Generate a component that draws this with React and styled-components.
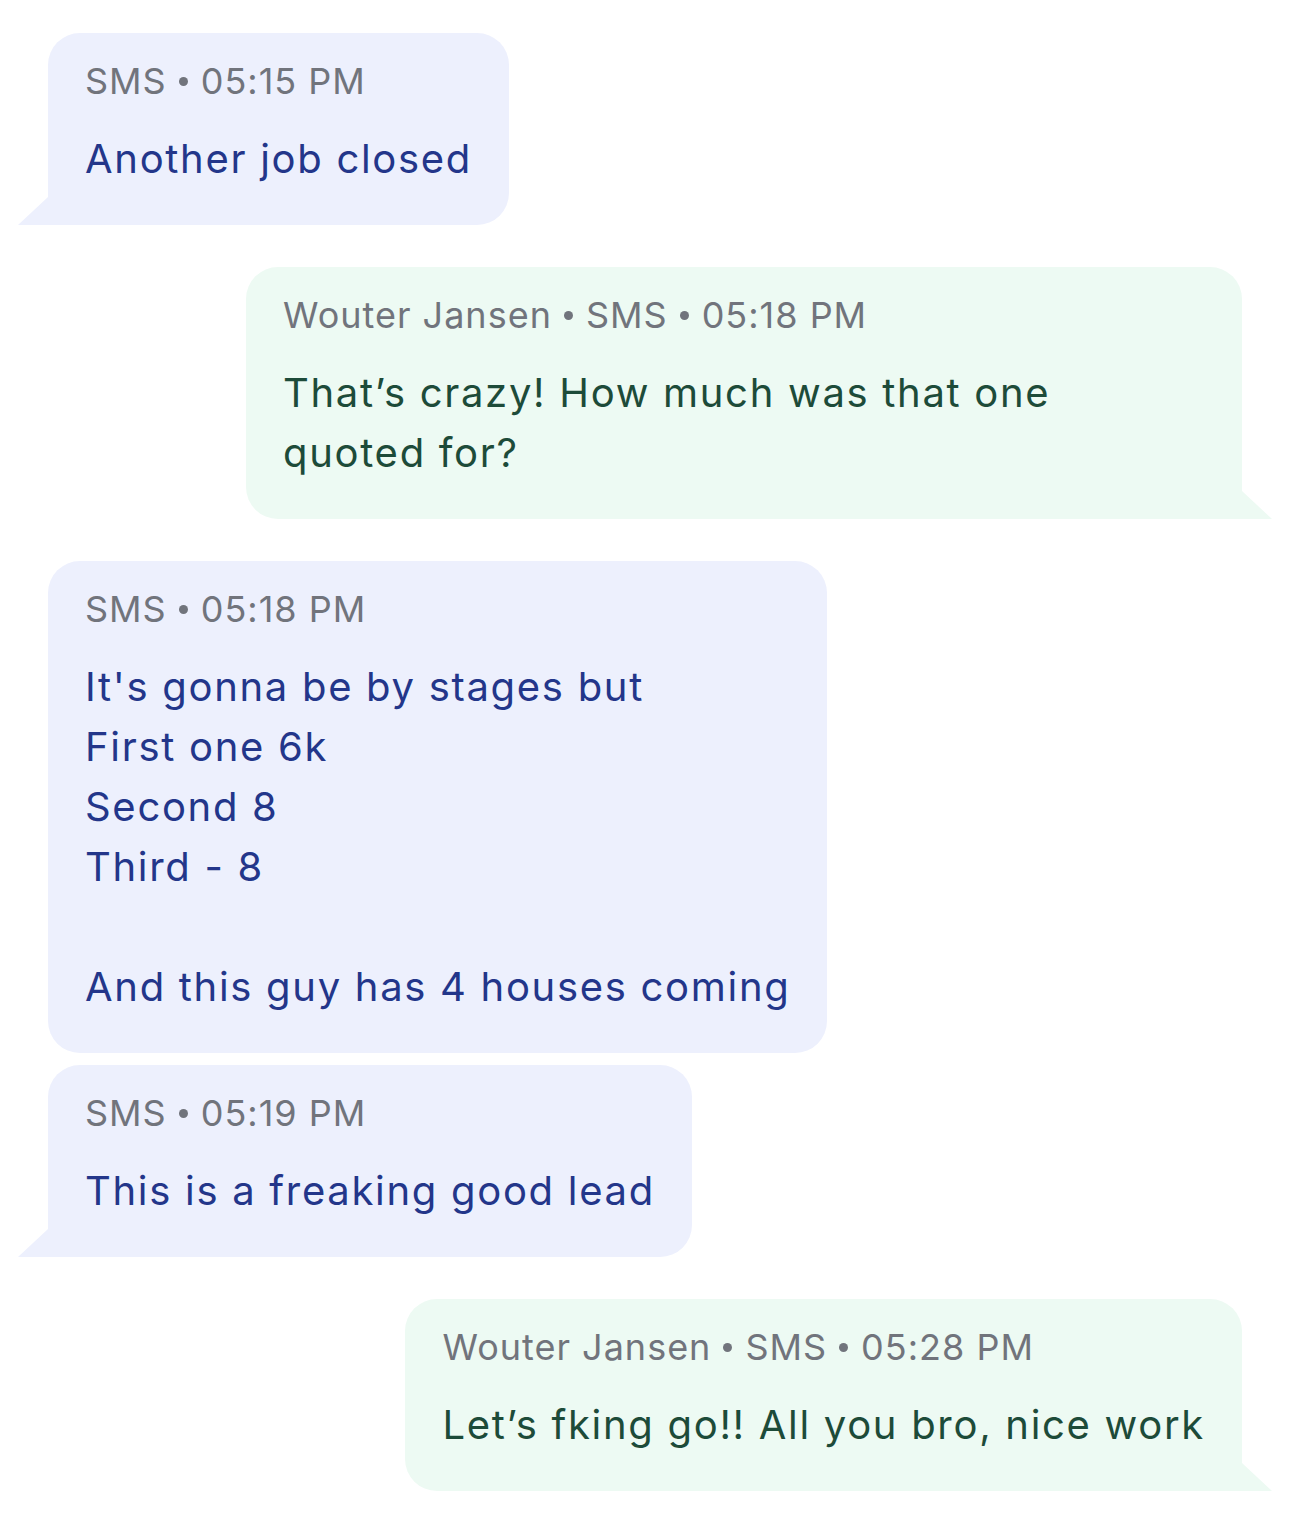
import React from "react";
import styled, { createGlobalStyle, css } from "styled-components";

const Global = createGlobalStyle`
  html, body { margin: 0; padding: 0; background: #ffffff; }
  body { font-family: Inter, "Noto Sans", sans-serif; -webkit-font-smoothing: antialiased; }
`;

const Thread = styled.div`
  display: flex;
  flex-direction: column;
  padding: 33px 48px 26px;
`;

const Row = styled.div`
  display: flex;
  justify-content: ${(p) => (p.$out ? "flex-end" : "flex-start")};
  margin-top: ${(p) => (p.$first ? "0" : p.$grouped ? "12px" : "42px")};
`;

const palette = {
  in: { bg: "#edf0fd", fg: "#23368a" },
  out: { bg: "#edfaf3", fg: "#1d4b39" },
};

const Bubble = styled.div`
  position: relative;
  box-sizing: border-box;
  max-width: 996px;
  padding: 28px 37px 36px;
  border-radius: 32px;
  background: ${(p) => (p.$out ? palette.out.bg : palette.in.bg)};
  ${(p) =>
    p.$tail &&
    (p.$out
      ? css`
          border-bottom-right-radius: 0;
          &::after {
            content: "";
            position: absolute;
            right: -30px;
            bottom: 0;
            width: 30px;
            height: 28px;
            background: ${palette.out.bg};
            clip-path: polygon(0 0, 100% 100%, 0 100%);
          }
        `
      : css`
          border-bottom-left-radius: 0;
          &::after {
            content: "";
            position: absolute;
            left: -30px;
            bottom: 0;
            width: 30px;
            height: 28px;
            background: ${palette.in.bg};
            clip-path: polygon(100% 0, 100% 100%, 0 100%);
          }
        `)}
`;

const Meta = styled.div`
  font-size: 36px;
  line-height: 40px;
  color: #71747c;
  letter-spacing: 1px;
  white-space: nowrap;
`;

const Dot = styled.span`
  display: inline-block;
  width: 9px;
  height: 9px;
  border-radius: 50%;
  background: #71747c;
  margin: 0 13px 0 12px;
  vertical-align: 8px;
`;

const Body = styled.div`
  margin-top: 28px;
  font-size: 40px;
  line-height: 60px;
  letter-spacing: 1.7px;
  color: ${(p) => (p.$out ? palette.out.fg : palette.in.fg)};
  white-space: pre-wrap;
`;

const messages = [
  { out: false, meta: ["SMS", "05:15 PM"], text: "Another job closed", tail: true },
  {
    out: true,
    meta: ["Wouter Jansen", "SMS", "05:18 PM"],
    text: "That’s crazy! How much was that one quoted for?",
    tail: true,
  },
  {
    out: false,
    meta: ["SMS", "05:18 PM"],
    text: "It's gonna be by stages but\nFirst one 6k\nSecond 8\nThird - 8\n\nAnd this guy has 4 houses coming",
    tail: false,
  },
  { out: false, meta: ["SMS", "05:19 PM"], text: "This is a freaking good lead", tail: true, grouped: true },
  {
    out: true,
    meta: ["Wouter Jansen", "SMS", "05:28 PM"],
    text: "Let’s fking go!! All you bro, nice work",
    tail: true,
  },
];

export default function App() {
  return (
    <>
      <Global />
      <Thread>
        {messages.map((m, i) => (
          <Row key={i} $out={m.out} $first={i === 0} $grouped={m.grouped}>
            <Bubble $out={m.out} $tail={m.tail}>
              <Meta>
                {m.meta.map((part, j) => (
                  <React.Fragment key={j}>
                    {j > 0 && <Dot />}
                    {part}
                  </React.Fragment>
                ))}
              </Meta>
              <Body $out={m.out}>{m.text}</Body>
            </Bubble>
          </Row>
        ))}
      </Thread>
    </>
  );
}
